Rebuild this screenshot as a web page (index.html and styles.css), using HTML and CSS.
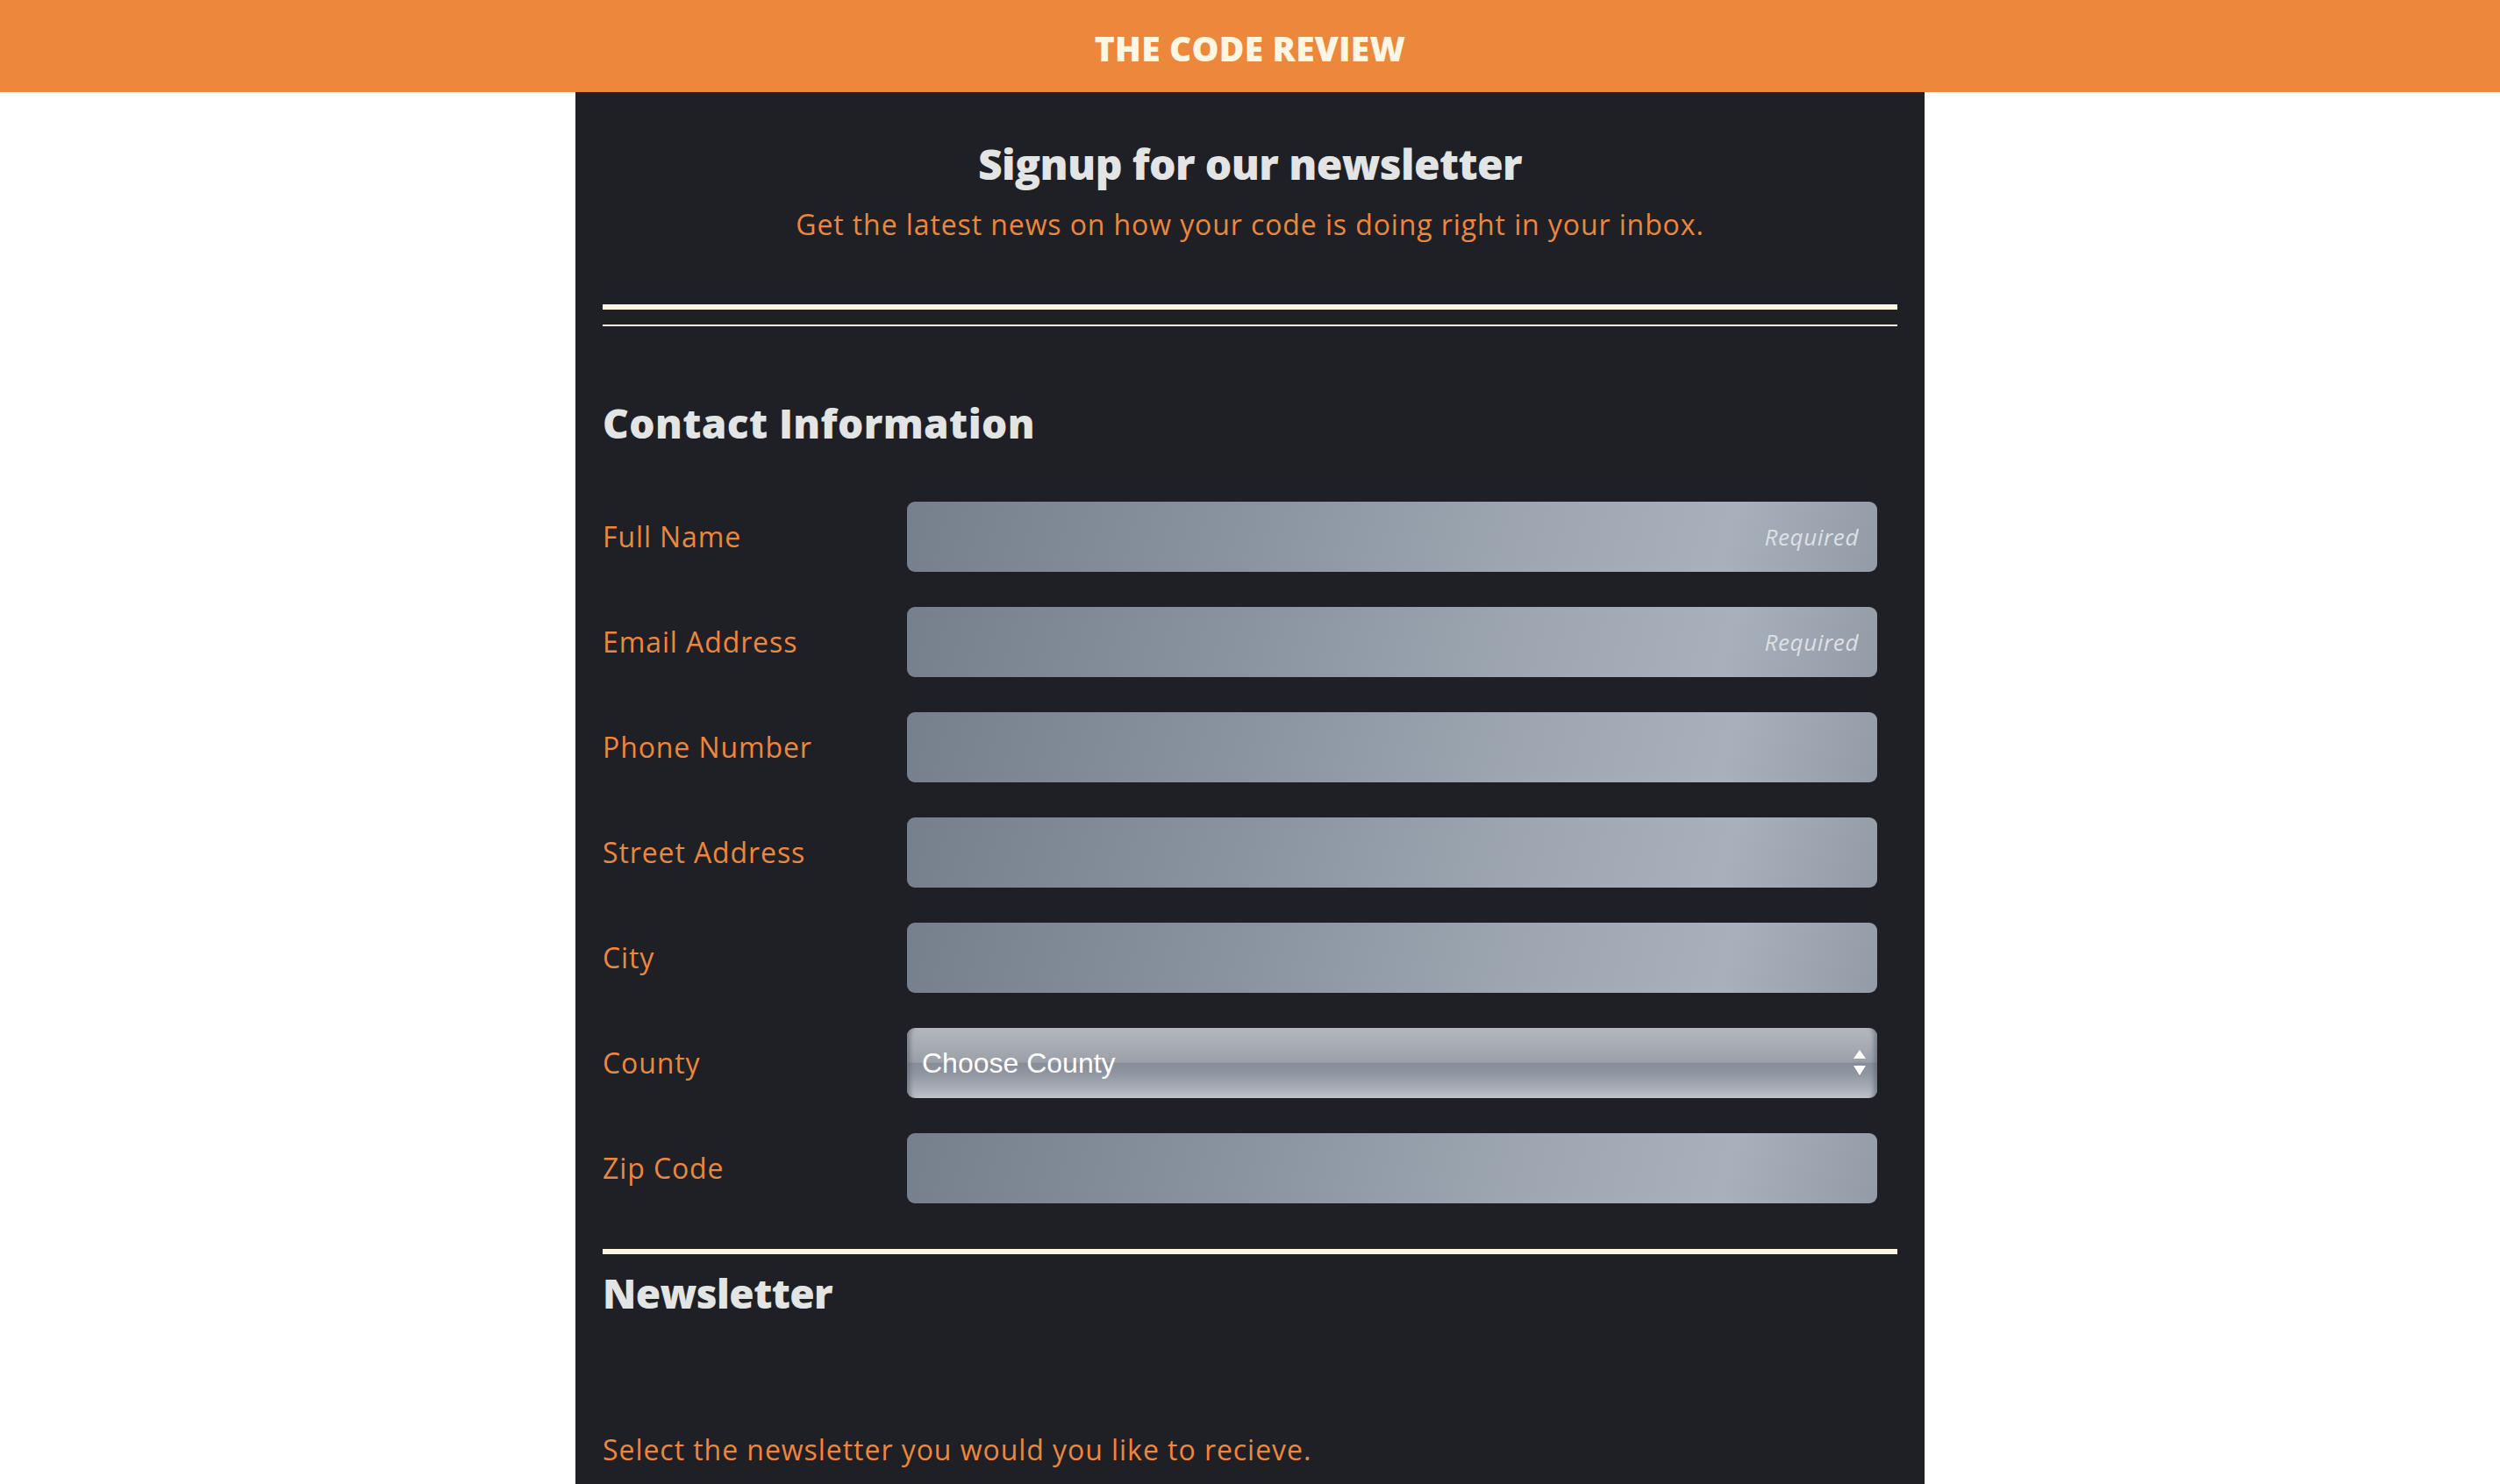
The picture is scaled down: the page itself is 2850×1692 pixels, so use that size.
FILE: index.html
```html
<!DOCTYPE html>
<html lang="en">
<head>
<meta charset="utf-8">
<title>The Code Review</title>
<link rel="stylesheet" href="styles.css">
</head>
<body>
<header class="topbar">
  <div class="brand">THE CODE REVIEW</div>
</header>
<main class="panel">
  <section class="intro">
    <h1 class="title">Signup for our newsletter</h1>
    <p class="lead">Get the latest news on how your code is doing right in your inbox.</p>
  </section>
  <hr class="rule rule-thick">
  <hr class="rule rule-thin">
  <h2 class="section-title first">Contact Information</h2>
  <form class="form">
    <div class="row">
      <label class="label" for="name">Full Name</label>
      <input class="field" id="name" type="text" placeholder="Required">
    </div>
    <div class="row">
      <label class="label" for="email">Email Address</label>
      <input class="field" id="email" type="email" placeholder="Required">
    </div>
    <div class="row">
      <label class="label" for="phone">Phone Number</label>
      <input class="field" id="phone" type="tel">
    </div>
    <div class="row">
      <label class="label" for="street">Street Address</label>
      <input class="field" id="street" type="text">
    </div>
    <div class="row">
      <label class="label" for="city">City</label>
      <input class="field" id="city" type="text">
    </div>
    <div class="row">
      <label class="label" for="county">County</label>
      <div class="select" id="county">
        <span class="select-text">Choose County</span>
        <span class="select-arrows">
          <svg width="14" height="30" viewBox="0 0 14 30"><path d="M7 0 L14 10 L0 10 Z" fill="#fff"/><path d="M0 18 L14 18 L7 29 Z" fill="#fff"/></svg>
        </span>
      </div>
    </div>
    <div class="row">
      <label class="label" for="zip">Zip Code</label>
      <input class="field" id="zip" type="text">
    </div>
  </form>
  <hr class="rule rule-thick rule-end">
  <h2 class="section-title second">Newsletter</h2>
  <p class="note">Select the newsletter you would you like to recieve.</p>
</main>
</body>
</html>
```
FILE: styles.css
```css
* { box-sizing: border-box; }
html, body { margin: 0; padding: 0; }
body {
  background: #ffffff;
  font-family: "Open Sans", "DejaVu Sans", sans-serif;
  height: 1692px;
  overflow: hidden;
}
.topbar {
  height: 105px;
  background: #ec873c;
  display: flex;
  align-items: center;
  justify-content: center;
}
.brand {
  color: #fdf6e3;
  font-weight: 800;
  font-size: 39px;
  letter-spacing: 0.2px;
  line-height: 1;
  padding-top: 3px;
}
.panel {
  width: 1538px;
  margin: 0 auto;
  background: #1f2026;
  padding: 52px 31px 40px;
  min-height: 1587px;
}
.intro { text-align: center; }
.title {
  margin: 0;
  color: #e3e5e4;
  font-size: 48px;
  line-height: 60px;
  font-weight: 800;
  letter-spacing: -0.6px;
}
.lead {
  margin: 19px 0 0;
  color: #ec873c;
  font-size: 32px;
  line-height: 40px;
  letter-spacing: 0.9px;
}
.rule {
  border: 0;
  margin: 0;
  background: #fdf6e3;
}
.rule-thick { height: 6px; margin-top: 71px; }
.rule-thin { height: 2px; margin-top: 17px; }
.rule-end { margin-top: 52px; }
.section-title {
  margin: 0;
  color: #e3e5e4;
  font-size: 46px;
  line-height: 58px;
  font-weight: 800;
  letter-spacing: -0.3px;
}
.section-title.first { margin-top: 81px; letter-spacing: 0.4px; }
.section-title.second { margin-top: 15px; letter-spacing: -0.6px; }
.form {
  margin-top: 61px;
  display: flex;
  flex-direction: column;
  gap: 40px;
}
.row {
  display: grid;
  grid-template-columns: 347px 1106px;
  align-items: center;
  height: 80px;
}
.label {
  color: #ec873c;
  font-size: 32px;
  line-height: 40px;
  letter-spacing: 0.9px;
}
.field {
  height: 80px;
  width: 100%;
  border: 0;
  border-radius: 9px;
  background: linear-gradient(105deg, #76808c 0%, #8a94a0 35%, #9ca5b0 62%, #a7b0bb 84%, #939ba6 100%);
  padding: 0 21px;
  font-family: "Open Sans", sans-serif;
  font-size: 26px;
  color: #ffffff;
  outline: none;
}
.field::placeholder {
  color: #dde0e4;
  font-style: italic;
  text-align: right;
  letter-spacing: 0.6px;
  opacity: 1;
}
.select {
  position: relative;
  height: 80px;
  border-radius: 9px;
  display: flex;
  align-items: center;
  padding: 0 17px;
  background: linear-gradient(to bottom, #b3b7be 0%, #a5aab2 30%, #9a9fa8 49%, #868d98 50%, #8f96a1 65%, #aab0b9 88%, #bfc4cc 100%);
  box-shadow: inset 10px 0 4px -6px rgba(90,97,110,0.55), inset -10px 0 4px -6px rgba(90,97,110,0.55);
}
.select-text {
  font-family: "Liberation Sans", Arial, sans-serif;
  font-size: 32px;
  color: #ffffff;
  flex: 1;
  line-height: 1;
}
.select-arrows {
  display: flex;
  align-items: center;
  margin-right: -4px;
}
.select-arrows svg { display: block; }
.note {
  margin: 130px 0 0;
  color: #ec873c;
  font-size: 32px;
  line-height: 40px;
  letter-spacing: 0.95px;
}
```
